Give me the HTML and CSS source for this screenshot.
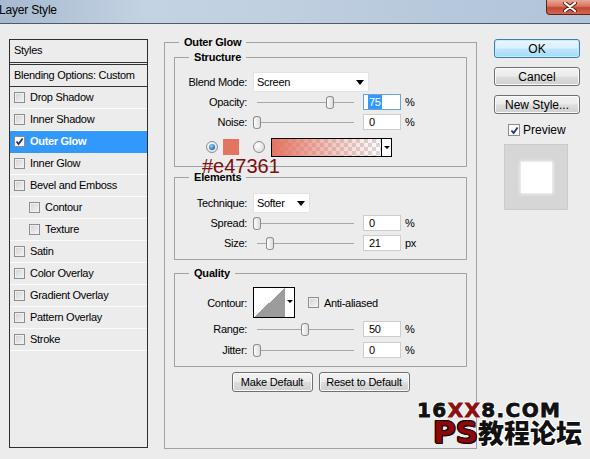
FILE: index.html
```html
<!DOCTYPE html>
<html>
<head>
<meta charset="utf-8">
<title>Layer Style</title>
<link rel="stylesheet" href="styles.css">
</head>
<body>
<div class="titlebar">
  <span class="title">Layer Style</span>
  <span class="close"><svg width="14" height="10" viewBox="0 0 14 10"><path d="M2 1 L12 9 M12 1 L2 9" stroke="#5a1d14" stroke-width="4" stroke-linecap="round"/><path d="M2 1 L12 9 M12 1 L2 9" stroke="#fff" stroke-width="2.2" stroke-linecap="round"/></svg></span>
</div>
<div class="dialog">
  <div class="styles-list">
    <div class="item header">Styles</div>
    <div class="item blending">Blending Options: Custom</div>
    <div class="item"><span class="cb"></span>Drop Shadow</div>
    <div class="item"><span class="cb"></span>Inner Shadow</div>
    <div class="item sel"><span class="cb on"><svg width="9" height="9" viewBox="0 0 9 9"><path d="M1.5 4.5 L3.6 7 L7.6 1.5" fill="none" stroke="#22307a" stroke-width="1.8"/></svg></span>Outer Glow</div>
    <div class="item"><span class="cb"></span>Inner Glow</div>
    <div class="item"><span class="cb"></span>Bevel and Emboss</div>
    <div class="item sub-item"><span class="cb"></span>Contour</div>
    <div class="item sub-item"><span class="cb"></span>Texture</div>
    <div class="item"><span class="cb"></span>Satin</div>
    <div class="item"><span class="cb"></span>Color Overlay</div>
    <div class="item"><span class="cb"></span>Gradient Overlay</div>
    <div class="item"><span class="cb"></span>Pattern Overlay</div>
    <div class="item"><span class="cb"></span>Stroke</div>
  </div>

  <div class="main">
    <div class="group outer">
      <div class="legend legend-outer">Outer Glow</div>

      <div class="group structure">
        <div class="legend">Structure</div>
        <div class="row first">
          <span class="lbl">Blend Mode:</span>
          <div class="select blend"><span>Screen</span><span class="tri"></span></div>
        </div>
        <div class="row">
          <span class="lbl">Opacity:</span>
          <div class="slider"><span class="thumb" style="margin-left:73px"></span></div>
          <div class="num focus"><span class="hl">75</span></div>
          <span class="unit">%</span>
        </div>
        <div class="row">
          <span class="lbl">Noise:</span>
          <div class="slider"><span class="thumb" style="margin-left:0px"></span></div>
          <div class="num">0</div>
          <span class="unit">%</span>
        </div>
        <div class="row color-row">
          <span class="radio on"><span class="dot"></span></span>
          <span class="swatch"></span>
          <span class="radio r2"></span>
          <div class="grad"><span class="grad-fill"></span><span class="grad-drop"><span class="tri small"></span></span></div>
          <span class="hex">#e47361</span>
        </div>
      </div>

      <div class="group elements">
        <div class="legend">Elements</div>
        <div class="row first">
          <span class="lbl">Technique:</span>
          <div class="select technique"><span>Softer</span><span class="tri"></span></div>
        </div>
        <div class="row">
          <span class="lbl">Spread:</span>
          <div class="slider"><span class="thumb" style="margin-left:0px"></span></div>
          <div class="num">0</div>
          <span class="unit">%</span>
        </div>
        <div class="row">
          <span class="lbl">Size:</span>
          <div class="slider"><span class="thumb" style="margin-left:13px"></span></div>
          <div class="num">21</div>
          <span class="unit">px</span>
        </div>
      </div>

      <div class="group quality">
        <div class="legend">Quality</div>
        <div class="row contour-row">
          <span class="lbl">Contour:</span>
          <div class="contour"><span class="curve"></span><span class="contour-drop"><span class="tri small"></span></span></div>
          <span class="cb aa"></span>
          <span>Anti-aliased</span>
        </div>
        <div class="row tight">
          <span class="lbl">Range:</span>
          <div class="slider"><span class="thumb" style="margin-left:48px"></span></div>
          <div class="num">50</div>
          <span class="unit">%</span>
        </div>
        <div class="row tight">
          <span class="lbl">Jitter:</span>
          <div class="slider"><span class="thumb" style="margin-left:0px"></span></div>
          <div class="num">0</div>
          <span class="unit">%</span>
        </div>
      </div>

      <div class="btn-row">
        <div class="btn small make">Make Default</div>
        <div class="btn small reset">Reset to Default</div>
      </div>
    </div>
  </div>

  <div class="side">
    <div class="btn ok">OK</div>
    <div class="btn">Cancel</div>
    <div class="btn">New Style...</div>
    <div class="preview-row">
      <span class="cb on pv"><svg width="9" height="9" viewBox="0 0 9 9"><path d="M1.5 4.5 L3.6 7 L7.6 1.5" fill="none" stroke="#22307a" stroke-width="1.8"/></svg></span>
      <span>Preview</span>
    </div>
    <div class="preview"><span class="preview-square"></span></div>
  </div>
</div>

<div class="wm">
  <div class="wm1"><span class="k">16</span><span class="r">XX</span><span class="k">8.COM</span></div>
  <div class="wm2"><span class="ps">PS</span><span class="cn">教程论坛</span></div>
</div>
</body>
</html>
```

FILE: styles.css
```css
* { box-sizing: border-box; }
html, body { margin: 0; padding: 0; }
body {
  width: 590px;
  height: 459px;
  overflow: hidden;
  position: relative;
  background: #ececec;
  font-family: "Liberation Sans", Arial, sans-serif;
  font-size: 11px;
  color: #000;
  letter-spacing: -0.3px;
}

/* title bar */
.titlebar {
  height: 24px;
  display: flex;
  justify-content: space-between;
  align-items: flex-start;
  background: linear-gradient(to right, #a6b9cf 0%, #c4d3e3 25%, #c1d0e1 45%, #b6c8db 75%, #b2c4d8 100%);
  border-bottom: 1px solid #4d5b6c;
}
.title {
  font-size: 12px;
  line-height: 21px;
  margin-left: -1px;
  letter-spacing: -0.2px;
}
.close {
  width: 47px;
  height: 15px;
  margin-right: -3px;
  border: 1px solid #5e2219;
  border-top: none;
  border-radius: 0 0 4px 4px;
  background: linear-gradient(#eaa797 0%, #d77462 45%, #c44632 55%, #cf6a4f 100%);
  display: flex;
  align-items: center;
  justify-content: center;
}

.dialog {
  display: flex;
  align-items: flex-start;
}

/* left styles list */
.styles-list {
  margin: 15px 0 0 9px;
  width: 139px;
  height: 409px;
  border: 1px solid #2e2e2e;
  flex: none;
}
.item {
  height: 22px;
  display: flex;
  align-items: center;
  padding-left: 4px;
  padding-bottom: 1px;
  border-bottom: 1px solid #fbfbfb;
  white-space: nowrap;
}
.item.header {
  height: 25px;
  padding-bottom: 2px;
  border-bottom: 3px double #333;
}
.item.blending { border-bottom: 1px solid #333; }
.item.sub-item { padding-left: 19px; }
.item.sel {
  background: #3398fb;
  border-bottom-color: #3398fb;
  color: #fff;
  font-weight: bold;
}

.cb {
  width: 11px;
  height: 11px;
  border: 1px solid #8d8e8e;
  background: linear-gradient(135deg, #d2d2d2, #f5f5f5);
  box-shadow: inset 0 0 0 1px #f0f0f0;
  margin-right: 5px;
  flex: none;
  display: flex;
  align-items: center;
  justify-content: center;
}
.cb.on {
  background: #fbfbfb;
  box-shadow: none;
}

/* main */
.main {
  margin: 18px 0 0 16px;
  width: 313px;
  flex: none;
}
.group { border: 1px solid #a2a2a2; }
.legend {
  display: table;
  margin: -7px 0 0 14px;
  padding: 0 5px;
  background: #ececec;
  font-weight: bold;
  line-height: 13px;
  letter-spacing: -0.2px;
}
.legend-outer { margin-left: 5px; }
.outer {
  height: 407px;
  padding: 0 9px;
}
.structure { margin-top: 8px; padding-bottom: 10px; }
.elements { margin-top: 10px; padding-bottom: 6px; }
.quality { margin-top: 13px; padding-bottom: 6px; }

.row {
  display: flex;
  align-items: center;
  height: 20px;
  white-space: nowrap;
}
.row.first { margin-top: 8px; }
.elements .row.first { margin-top: 9px; }
.row.tight { margin-top: 1px; }
.lbl {
  width: 72px;
  text-align: right;
  margin-right: 6px;
  flex: none;
}

.select {
  height: 20px;
  background: #fff;
  border: 1px solid #e3e3e3;
  display: flex;
  align-items: center;
  justify-content: space-between;
  padding: 0 4px 0 3px;
}
.select.blend { width: 116px; }
.select.technique { width: 57px; }
.tri {
  width: 0;
  height: 0;
  border-left: 4px solid transparent;
  border-right: 4px solid transparent;
  border-top: 5px solid #000;
}
.tri.small {
  border-left-width: 3px;
  border-right-width: 3px;
  border-top-width: 3px;
}

.slider {
  width: 104px;
  height: 20px;
  display: flex;
  align-items: center;
  background: linear-gradient(#a8a8a8, #a8a8a8) no-repeat 4px 50% / 97px 1px;
  flex: none;
}
.thumb {
  width: 8px;
  height: 13px;
  border: 1px solid #8a8a8a;
  border-radius: 4px / 3px;
  background: linear-gradient(to right, #fdfdfd, #dcdcdc);
  flex: none;
}
.num {
  width: 38px;
  height: 16px;
  margin-left: 6px;
  border: 1px solid #cdcdcd;
  background: #fff;
  padding-left: 5px;
  display: flex;
  align-items: center;
  flex: none;
}
.num.focus { border-color: #6fa1d6; padding-left: 5px; }
.hl {
  background: #3399ff;
  color: #fff;
  height: 14px;
  line-height: 14px;
  padding: 0 1px;
  margin-left: -1px;
}
.unit { margin-left: 4px; }

/* color row */
.color-row {
  margin-top: 6px;
  height: 18px;
  padding-left: 31px;
  position: relative;
}
.radio {
  width: 12px;
  height: 12px;
  border-radius: 50%;
  border: 1px solid #8d8e8e;
  background: radial-gradient(circle at 35% 35%, #fdfdfd, #d6d6d6);
  display: flex;
  align-items: center;
  justify-content: center;
  flex: none;
}
.radio .dot {
  width: 6px;
  height: 6px;
  border-radius: 50%;
  background: radial-gradient(circle at 40% 35%, #9ad6f6, #1c6eb2 70%, #0f4d87);
}
.swatch {
  width: 16px;
  height: 16px;
  background: #e47361;
  margin-left: 5px;
  flex: none;
}
.radio.r2 { margin-left: 14px; }
.grad {
  width: 121px;
  height: 19px;
  margin-left: 6px;
  border: 1px solid #000;
  display: flex;
  flex: none;
}
.grad-fill {
  flex: 1;
  background:
    linear-gradient(to right, #e47361, rgba(228, 115, 97, 0.45) 50%, rgba(228, 115, 97, 0)),
    repeating-conic-gradient(#d9d9d9 0 25%, #ffffff 0 50%) 0 0 / 8px 8px;
}
.grad-drop {
  width: 10px;
  border-left: 1px solid #000;
  background: #fff;
  display: flex;
  align-items: center;
  justify-content: center;
}
.hex {
  position: absolute;
  left: 27px;
  top: 18px;
  font-size: 20px;
  line-height: 20px;
  color: #7c0e0e;
  letter-spacing: 0;
}

/* contour */
.contour-row {
  margin-top: 7px;
  height: 31px;
}
.contour {
  width: 42px;
  height: 31px;
  border: 1px solid #000;
  display: flex;
  flex: none;
  margin-right: 13px;
}
.curve {
  width: 31px;
  background: linear-gradient(to top left, #9c9c9c 50%, #fff 50%);
}
.contour-drop {
  flex: 1;
  background: #fff;
  display: flex;
  align-items: center;
  justify-content: center;
  padding-bottom: 3px;
}
.cb.aa { margin-right: 5px; }

/* buttons */
.btn-row {
  display: flex;
  justify-content: center;
  gap: 6px;
  margin-top: 5px;
}
.btn {
  height: 19px;
  border: 1px solid #707070;
  border-radius: 3px;
  background: linear-gradient(#f3f3f3 0%, #ebebeb 48%, #dddddd 52%, #cfcfcf 100%);
  box-shadow: inset 0 0 0 1px #fbfbfb;
  display: flex;
  align-items: center;
  justify-content: center;
  font-size: 12px;
  letter-spacing: 0;
  margin-bottom: 9px;
}
.btn.small {
  height: 20px;
  font-size: 11px;
  letter-spacing: -0.2px;
  margin-bottom: 0;
}
.btn.make { width: 81px; }
.btn.reset { width: 91px; }

.side {
  margin: 15px 0 0 17px;
  width: 86px;
  flex: none;
}
.btn.ok {
  border-color: #3c7fb1;
  background: linear-gradient(#eaf6fd 0%, #d9f0fc 48%, #bee6fd 52%, #a7d9f5 100%);
  box-shadow: inset 0 0 0 1px #c6ecfc;
}
.preview-row {
  display: flex;
  align-items: center;
  height: 20px;
  margin-top: -3px;
  padding-left: 14px;
  font-size: 12px;
  letter-spacing: 0;
}
.cb.pv { width: 12px; height: 12px; margin-right: 3px; }
.preview {
  margin: 4px 0 0 10px;
  width: 64px;
  height: 66px;
  background: #d6d6d6;
  border: 1px solid #cacaca;
  display: flex;
  align-items: center;
  justify-content: center;
}
.preview-square {
  width: 31px;
  height: 31px;
  background: #fff;
  box-shadow: 0 0 3px 1px #fbf6f2;
}

/* watermark */
.wm {
  position: absolute;
  left: 417px;
  top: 400px;
  letter-spacing: 0;
}
.wm1 {
  font-family: "DejaVu Sans", sans-serif;
  font-weight: bold;
  font-size: 20px;
  line-height: 20px;
  letter-spacing: 1.4px;
  white-space: nowrap;
  -webkit-text-stroke: 0.8px currentColor;
  text-shadow: 1px 0 #fff, -1px 0 #fff, 0 1px #fff, 0 -1px #fff, 1px 1px #fff, -1px -1px #fff, 1px -1px #fff, -1px 1px #fff;
}
.wm1 .k { color: #111; }
.wm1 .r { color: #8c0f0f; }
.wm2 {
  line-height: 22px;
  white-space: nowrap;
  padding-left: 16px;
  margin-top: 1px;
}
.ps {
  font-family: "DejaVu Sans", sans-serif;
  font-weight: bold;
  font-size: 31px;
  color: #8c0a0a;
  -webkit-text-stroke: 0.6px #5a0505;
  text-shadow: 1px 0 #000, -1px 0 #000, 0 1px #000, 0 -1px #000, 1px 1px #000, -1px -1px #000;
}
.cn {
  font-family: "Noto Sans CJK SC", sans-serif;
  font-weight: 900;
  font-size: 26px;
  color: #111;
  text-shadow: 1px 0 #fff, -1px 0 #fff, 0 1px #fff, 0 -1px #fff, 1px 1px #fff, -1px -1px #fff, 1px -1px #fff, -1px 1px #fff;
}
```
